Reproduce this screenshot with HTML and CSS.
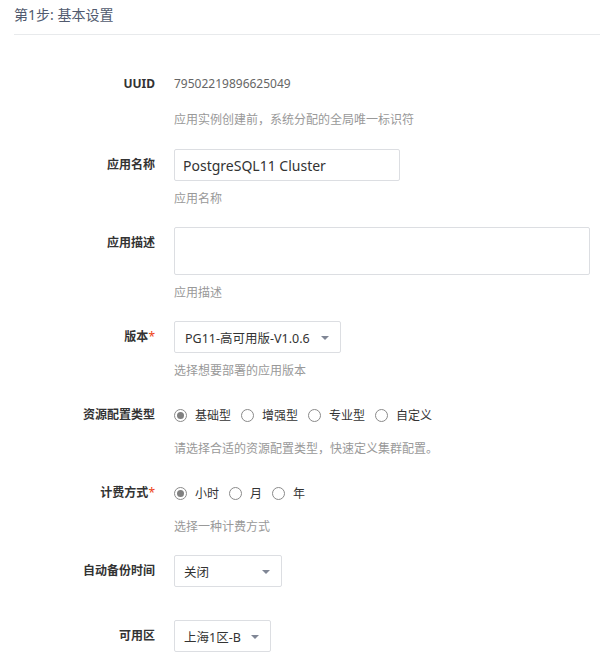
FILE: index.html
```html
<!DOCTYPE html>
<html lang="zh-CN">
<head>
<meta charset="utf-8">
<title>第1步: 基本设置</title>
<link rel="stylesheet" href="styles.css">
</head>
<body>
<div class="page">
  <div class="step-title">第1步: 基本设置</div>
  <form class="form">
    <div class="form-item form-item--uuid">
      <div class="label">UUID</div>
      <div class="control">
        <div class="value">79502219896625049</div>
        <div class="help help--uuid">应用实例创建前，系统分配的全局唯一标识符</div>
      </div>
    </div>
    <div class="form-item">
      <div class="label">应用名称</div>
      <div class="control">
        <input class="input" type="text" value="PostgreSQL11 Cluster">
        <div class="help">应用名称</div>
      </div>
    </div>
    <div class="form-item">
      <div class="label">应用描述</div>
      <div class="control">
        <textarea class="textarea"></textarea>
        <div class="help">应用描述</div>
      </div>
    </div>
    <div class="form-item">
      <div class="label">版本<span class="req">*</span></div>
      <div class="control">
        <div class="select select--version"><span>PG11-高可用版-V1.0.6</span><i class="caret"></i></div>
        <div class="help">选择想要部署的应用版本</div>
      </div>
    </div>
    <div class="form-item">
      <div class="label">资源配置类型</div>
      <div class="control">
        <div class="radio-group">
          <label class="radio"><span class="dot dot--on"></span>基础型</label>
          <label class="radio"><span class="dot"></span>增强型</label>
          <label class="radio"><span class="dot"></span>专业型</label>
          <label class="radio"><span class="dot"></span>自定义</label>
        </div>
        <div class="help">请选择合适的资源配置类型，快速定义集群配置。</div>
      </div>
    </div>
    <div class="form-item">
      <div class="label">计费方式<span class="req">*</span></div>
      <div class="control">
        <div class="radio-group">
          <label class="radio"><span class="dot dot--on"></span>小时</label>
          <label class="radio"><span class="dot"></span>月</label>
          <label class="radio"><span class="dot"></span>年</label>
        </div>
        <div class="help">选择一种计费方式</div>
      </div>
    </div>
    <div class="form-item form-item--nohelp">
      <div class="label">自动备份时间</div>
      <div class="control">
        <div class="select select--backup"><span>关闭</span><i class="caret"></i></div>
      </div>
    </div>
    <div class="form-item">
      <div class="label">可用区</div>
      <div class="control">
        <div class="select select--zone"><span>上海1区-B</span><i class="caret"></i></div>
      </div>
    </div>
  </form>
</div>
</body>
</html>
```
FILE: styles.css
```css
html, body {
  margin: 0;
  padding: 0;
  background: #fff;
}
body {
  font-family: "Noto Sans", "Noto Sans CJK SC", sans-serif;
  font-size: 12px;
  color: #333;
}
.page {
  padding-left: 14px;
}
.step-title {
  height: 34px;
  line-height: 30px;
  font-size: 14px;
  color: #515a6e;
  border-bottom: 1px solid #e8eaec;
}
.form {
  margin-top: 33px;
}
.form-item {
  display: flex;
  margin-bottom: 20px;
}
.form-item--uuid {
  margin-bottom: 21px;
}
.form-item--nohelp {
  margin-bottom: 33px;
}
.label {
  width: 141px;
  flex: none;
  margin-right: 19px;
  text-align: right;
  line-height: 32px;
  font-weight: 700;
  color: #333;
  white-space: nowrap;
}
.req {
  color: #ed4014;
  font-weight: 400;
}
.control {
  flex: 1;
  padding-right: 10px;
}
.value {
  line-height: 32px;
  color: #666;
}
.help {
  margin-top: 10px;
  line-height: 16px;
  color: #999;
}
.help--uuid {
  margin-top: 12px;
}
.input {
  display: block;
  box-sizing: border-box;
  width: 226px;
  height: 32px;
  padding: 0 8px;
  border: 1px solid #dcdee2;
  border-radius: 2px;
  font-family: "Noto Sans", "Noto Sans CJK SC", sans-serif;
  font-size: 14px;
  color: #333;
  outline: none;
}
.textarea {
  display: block;
  box-sizing: border-box;
  width: 100%;
  height: 48px;
  border: 1px solid #dcdee2;
  border-radius: 2px;
  resize: none;
  outline: none;
  margin: 0;
}
.select {
  box-sizing: border-box;
  height: 32px;
  display: flex;
  align-items: center;
  justify-content: space-between;
  padding: 0 11px 0 10px;
  border: 1px solid #dcdee2;
  border-radius: 2px;
  font-size: 12.5px;
  color: #333;
}
.select--version { width: 167px; }
.select--backup { width: 108px; padding-left: 9px; }
.select--zone { width: 97px; padding-left: 9px; }
.caret {
  width: 0;
  height: 0;
  border-left: 4px solid transparent;
  border-right: 4px solid transparent;
  border-top: 4px solid #808695;
  margin-top: 1px;
}
.radio-group {
  display: flex;
  align-items: center;
  height: 32px;
  gap: 10px;
}
.radio {
  display: flex;
  align-items: center;
  color: #333;
}
.dot {
  box-sizing: border-box;
  width: 13px;
  height: 13px;
  border: 1px solid #8a8a8a;
  border-radius: 50%;
  margin-right: 8px;
  position: relative;
}
.dot--on::after {
  content: "";
  position: absolute;
  left: 2px;
  top: 2px;
  width: 7px;
  height: 7px;
  border-radius: 50%;
  background: #808080;
}
```
